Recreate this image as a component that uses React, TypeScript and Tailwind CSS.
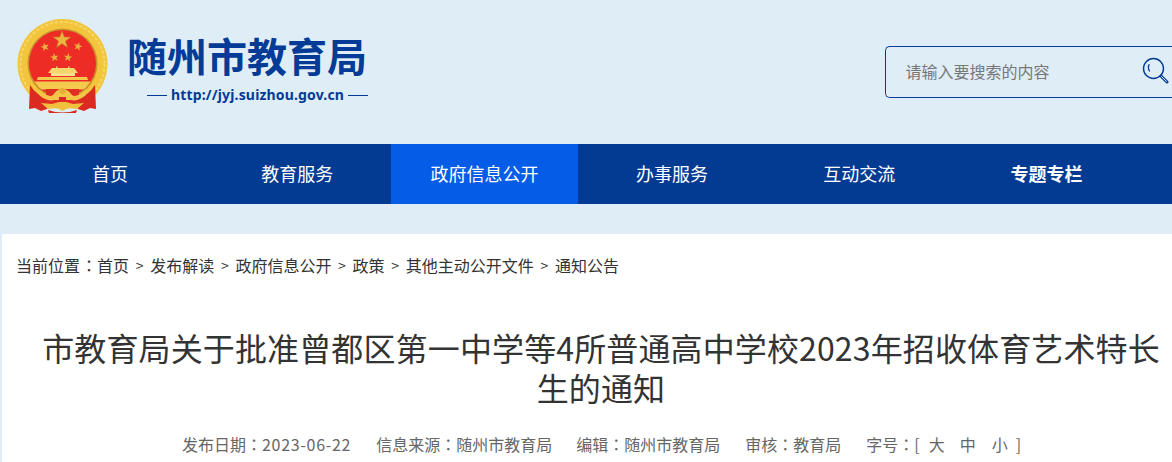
import React from "react";

const cjk = "font-['Noto_Sans_CJK_SC',sans-serif]";

function star(cx: number, cy: number, r: number, rot = 0) {
  const pts: string[] = [];
  for (let i = 0; i < 10; i++) {
    const rad = i % 2 === 0 ? r : r * 0.4;
    const a = ((-90 + rot + i * 36) * Math.PI) / 180;
    pts.push(`${(cx + rad * Math.cos(a)).toFixed(2)},${(cy + rad * Math.sin(a)).toFixed(2)}`);
  }
  return pts.join(" ");
}

function Emblem() {
  return (
    <svg width="92" height="96" viewBox="0 0 92 96" className="shrink-0">
      {/* wheat ring */}
      <circle cx="46.5" cy="45" r="45" fill="#f2c53d" />
      <circle cx="46.5" cy="45" r="42" fill="none" stroke="#f7d767" strokeWidth="2" strokeDasharray="3 2" />
      <circle cx="46.5" cy="44.5" r="35" fill="#c9922c" />
      <clipPath id="red">
        <circle cx="46.5" cy="44.5" r="33.5" />
      </clipPath>
      <circle cx="46.5" cy="44.5" r="33.5" fill="#ee2c26" />
      {/* stars */}
      <polygon points={star(46, 21, 9)} fill="#ecb63f" stroke="#c48c2c" strokeWidth="0.6" />
      <polygon points={star(29, 28, 4.5, -15)} fill="#e6b03c" />
      <polygon points={star(62, 27.5, 4.5, 15)} fill="#e6b03c" />
      <polygon points={star(38.5, 38.5, 4.5, -8)} fill="#e6b03c" />
      <polygon points={star(52, 38.5, 4.5, 8)} fill="#e6b03c" />
      {/* gate */}
      <g clipPath="url(#red)">
        <rect x="40" y="47.5" width="1.5" height="2" fill="#f6d66c" />
        <rect x="52" y="47.5" width="1.5" height="2" fill="#f6d66c" />
        <path d="M36 49 H58 L62 54 H32 Z" fill="#f6d66c" />
        <rect x="35" y="54" width="24" height="3" fill="#f9e08a" />
        <path d="M22 58 H71 L72 61 H21 Z" fill="#f4c94e" />
        <rect x="10" y="62.5" width="74" height="8" fill="#f5cb4d" />
      </g>
      {/* ribbons */}
      <path d="M14 66 Q20 76 32 80 L36 84 L31 90 L25 92 L19 89 L13 90 Z" fill="#da2a21" />
      <path d="M79 66 Q73 76 61 80 L57 84 L62 90 L68 92 L74 89 L80 90 Z" fill="#da2a21" />
      <path d="M30 70 H63 V86 H30 Z" fill="#e03024" />
      {/* knot */}
      <path d="M25 72 Q33 79 37 76 Q46 63 56 76 Q60 79 68 72 L70 76 Q62 83 55 81 L38 81 Q31 83 23 76 Z" fill="#f3c548" />
      <circle cx="46.5" cy="72" r="3" fill="#e5ad35" />
      <rect x="43" y="78" width="7" height="4" fill="#d8281f" />
      {/* wings */}
      <path d="M25 84 L36 85 L43 83 H50 L57 85 L68 84 L61 90 L52 89 L46.5 92 L41 89 L32 90 Z" fill="#f1c03c" />
      <path d="M32 91 Q46.5 96 61 91 L60 94 H33 Z" fill="#d8281f" />
    </svg>
  );
}

const nav = ["首页", "教育服务", "政府信息公开", "办事服务", "互动交流", "专题专栏"];
const crumbs = ["首页", "发布解读", "政府信息公开", "政策", "其他主动公开文件", "通知公告"];

function Colon() {
  return <span className="font-['Noto_Sans_CJK_TC',sans-serif]">：</span>;
}

export default function App() {
  return (
    <div className={`h-[462px] w-[1172px] overflow-hidden bg-[#dfedf7] ${cjk}`}>
      <header className="flex h-[144px] items-start justify-between">
        <div className="flex pl-[16px] pt-[19px]">
          <Emblem />
          <div className="ml-[19px] flex flex-col">
            <h1 className="mt-[8px] h-[56px] text-[40px] leading-[56px] font-bold text-[#033b96]">随州市教育局</h1>
            <div className="ml-[20px] mt-[3px] flex items-center gap-[4px]">
              <span className="h-[1px] w-[20px] bg-[#033b96]" />
              <span className="font-['Noto_Sans',sans-serif] text-[14px] leading-[18px] font-bold tracking-[0.16px] text-[#033b96]">
                http://jyj.suizhou.gov.cn
              </span>
              <span className="h-[1px] w-[20px] bg-[#033b96]" />
            </div>
          </div>
        </div>
        <div className="mt-[46px] flex h-[52px] w-[287px] items-center justify-between rounded-l-[5px] border border-r-0 border-[#033b96] pl-[19.5px] pr-[3px]">
          <span className="mb-[3px] text-[16px] text-[#777777]">请输入要搜索的内容</span>
          <svg width="27" height="28" viewBox="0 0 27 28" fill="none" className="mt-[-3px]">
            <circle cx="11.5" cy="11.5" r="10" stroke="#033b96" strokeWidth="1.4" />
            <path d="M7 7.5 Q5.5 11 7.5 14" stroke="#033b96" strokeWidth="1.2" strokeLinecap="round" />
            <path d="M19 19 L25 25" stroke="#033b96" strokeWidth="3" strokeLinecap="round" />
            <path d="M19.5 19.5 L24.5 24.5" stroke="#dfedf7" strokeWidth="1" strokeLinecap="round" />
          </svg>
        </div>
      </header>

      <nav className="flex h-[60px] bg-[#033b93] px-[16.3px] text-[18px] text-white">
        {nav.map((n, i) => (
          <a
            key={n}
            className={`flex w-[187.33px] items-center justify-center pb-[2px] ${i === 2 ? "bg-[#055ce6]" : ""} ${i === 5 ? "font-bold" : ""}`}
          >
            {n}
          </a>
        ))}
      </nav>

      <main className="ml-[2px] mt-[30px] h-[228px] bg-white">
        <div className="flex items-center pl-[14px] pt-[19px] text-[16px] leading-[24px] text-[#333333]">
          <span>当前位置<span className="ml-[1px]"><Colon /></span></span>
          {crumbs.map((c, i) => (
            <React.Fragment key={c}>
              {i > 0 && <span className="mx-[6.7px] text-[14px]">&gt;</span>}
              <span>{c}</span>
            </React.Fragment>
          ))}
        </div>
        <h2 className="mt-[50px] pl-[38px] pr-[10px] text-center text-[32px] leading-[40px] font-normal tracking-[0.13px] text-[#333333]">
          市教育局关于批准曾都区第一中学等4所普通高中学校2023年招收体育艺术特长生的通知
        </h2>
        <div className="ml-[180px] mt-[25px] flex text-[16px] leading-[24px] text-[#666666]">
          <span className="mr-[25px]">发布日期<Colon /><span className="tracking-[0.7px]">2023-06-22</span></span>
          <span className="mr-[24px]">信息来源<Colon />随州市教育局</span>
          <span className="mr-[25px]">编辑<Colon />随州市教育局</span>
          <span className="mr-[25px]">审核<Colon />教育局</span>
          <span>字号<Colon />[</span>
          <span className="ml-[9px]">大</span>
          <span className="ml-[15px]">中</span>
          <span className="ml-[16px]">小</span>
          <span className="ml-[8px]">]</span>
        </div>
      </main>
    </div>
  );
}
